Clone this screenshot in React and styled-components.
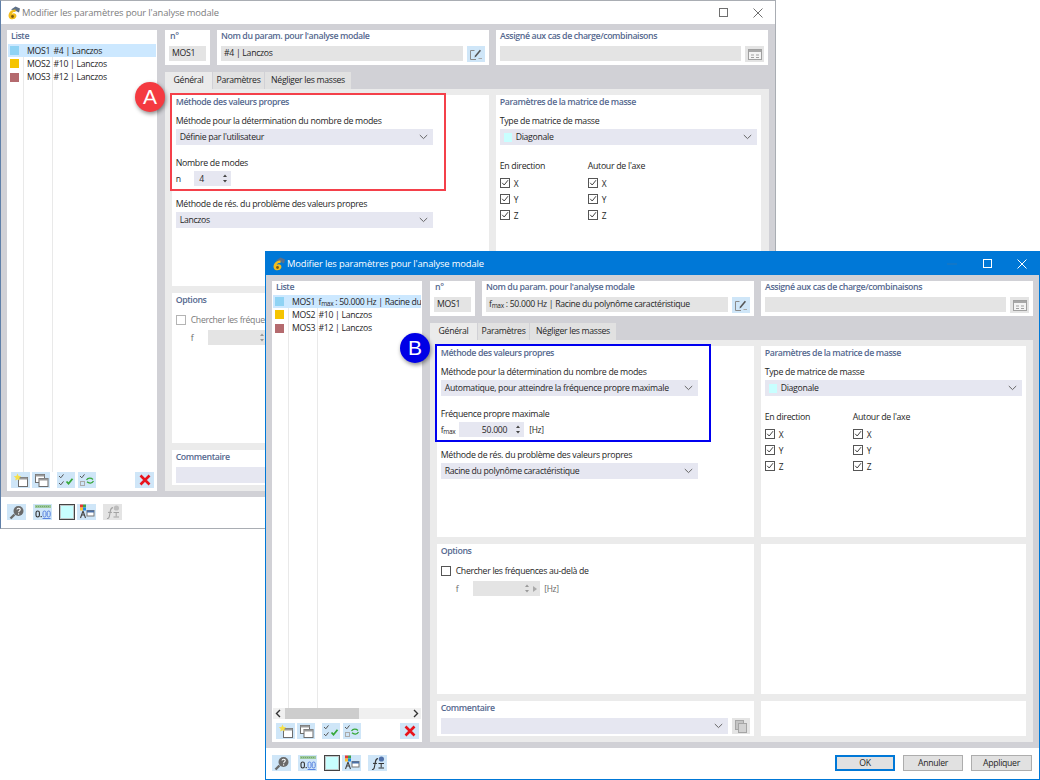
import React from "react";
import styled, { createGlobalStyle } from "styled-components";

const Global = createGlobalStyle`
  html, body { margin: 0; padding: 0; background: #fff; }
  body { font-family: "Open Sans", "Noto Sans", "Liberation Sans", sans-serif; font-size: 9px; color: #262626; letter-spacing: -0.3px; }
  * { box-sizing: border-box; }
  svg { flex-shrink: 0; }
`;

const Stage = styled.main`
  position: relative;
  width: 1040px;
  height: 780px;
  overflow: hidden;
  background: #fff;
`;

const Win = styled.section`
  position: absolute;
  left: ${(p) => p.$x}px;
  top: ${(p) => p.$y}px;
  width: ${(p) => p.$w}px;
  height: 529px;
  display: flex;
  flex-direction: column;
  background: #fff;
  border: 1px solid ${(p) => (p.$active ? "#0078d7" : "#a9adb3")};
  ${(p) => (p.$active ? "" : "border-left-color:#5f7fa8;")}
`;

const TitleBar = styled.header`
  height: 23px;
  flex: none;
  display: flex;
  align-items: center;
  padding-left: 4px;
  gap: 1px;
  background: ${(p) => (p.$active ? "#0078d7" : "#fff")};
  color: ${(p) => (p.$active ? "#fff" : "#7d7d7d")};
  font-size: 9.4px;
  letter-spacing: -0.14px;
`;

const TitleText = styled.span`
  flex: 1;
  white-space: nowrap;
`;

const WinCtl = styled.span`
  width: 34px;
  height: 22px;
  display: flex;
  align-items: center;
  justify-content: center;
  color: ${(p) => (p.$active ? "#fff" : "#6f6f6f")};
`;

const Body = styled.div`
  flex: none;
  height: 473px;
  display: flex;
  gap: 8px;
  padding: 6px;
  background: #d1d1d6;
`;

const ListPanel = styled.aside`
  width: 150px;
  flex: none;
  display: flex;
  flex-direction: column;
  background: #fff;
  padding: 0 1px 3px 1px;
`;

const PanelTitle = styled.div`
  height: 14px;
  line-height: 12px;
  padding-left: ${(p) => p.$pad ?? 0}px;
  color: #56698f;
  font-size: 8.8px;
  font-weight: 600;
  letter-spacing: -0.4px;
  white-space: nowrap;
`;

const ListBody = styled.div`
  flex: 1;
  min-height: 0;
  overflow: hidden;
  background-image: linear-gradient(#e9e9e9, #e9e9e9), linear-gradient(#e9e9e9, #e9e9e9);
  background-size: 1px 100%, 1px 100%;
  background-position: 15px 0, 44px 0;
  background-repeat: no-repeat;
`;

const ListRow = styled.div`
  height: 13.3px;
  display: flex;
  align-items: center;
  white-space: nowrap;
  overflow: hidden;
  background: ${(p) => (p.$selected ? "#cce8ff" : "transparent")};
`;

const Swatch = styled.span`
  width: 9px;
  height: 9px;
  margin: 0 8px 0 2px;
  flex: none;
  background: ${(p) => p.$c};
`;

const RowCode = styled.span`
  width: 26.5px;
  flex: none;
  font-size: 8.7px;
`;

const RowText = styled.span`
  font-size: 8.7px;
  sub { font-size: 6.5px; vertical-align: -1px; line-height: 0; }
`;

const ScrollBar = styled.div`
  height: 11px;
  margin: 0 0 4px 0;
  flex: none;
  display: flex;
  align-items: center;
  justify-content: space-between;
  background: #f0f0f0;
  color: #444;
`;

const ScrollThumb = styled.div`
  width: 74px;
  height: 11px;
  margin-left: 1px;
  margin-right: auto;
  background: #cdcdcd;
`;

const ToolRow = styled.div`
  flex: none;
  display: flex;
  align-items: center;
  height: 16px;
  padding-left: ${(p) => p.$pad ?? 0}px;
`;

const IconBtn = styled.span`
  width: ${(p) => p.$w ?? 18}px;
  height: 16px;
  flex: none;
  margin-left: ${(p) => p.$ml ?? 0}px;
  display: flex;
  align-items: center;
  justify-content: center;
  background: ${(p) => (p.$off ? "#e4e4e4" : "#cfe6f8")};
`;

const Main = styled.div`
  flex: 1;
  min-width: 0;
  display: flex;
  flex-direction: column;
`;

const HeadRow = styled.div`
  display: flex;
  gap: 7px;
  height: 35px;
  flex: none;
`;

const HeadPanel = styled.div`
  width: ${(p) => p.$w}px;
  flex: none;
  background: #fff;
  padding: 0 4px;
  display: flex;
  flex-direction: column;
`;

const HeadInputs = styled.div`
  display: flex;
  gap: 4px;
  margin-top: 2px;
`;

const TextField = styled.div`
  flex: 1;
  min-width: 0;
  height: 15px;
  line-height: 15px;
  padding-left: 3px;
  background: #e4e4e4;
  font-size: 8.7px;
  white-space: nowrap;
  overflow: hidden;
  sub { font-size: 6.5px; vertical-align: -1px; line-height: 0; }
`;

const Tabs = styled.nav`
  display: flex;
  gap: 1px;
  height: 17px;
  margin-top: 7px;
  flex: none;
`;

const Tab = styled.span`
  width: ${(p) => p.$w}px;
  text-align: center;
  line-height: 17px;
  font-size: 8.7px;
  white-space: nowrap;
  background: ${(p) => (p.$on ? "#ebebeb" : "#e1e1e1")};
`;

const TabPage = styled.div`
  flex: 1;
  min-height: 0;
  background: #ebebeb;
  padding: 6px 7px;
  display: grid;
  grid-template-columns: 317px 265px;
  grid-template-rows: 191px 150px 35px;
  gap: 7px;
`;

const Group = styled.div`
  background: #fff;
  padding: 1px 4px 1px 3.7px;
  min-width: 0;
`;

const Label = styled.div`
  height: 12px;
  line-height: 12px;
  margin-top: ${(p) => p.$mt ?? 5}px;
  margin-bottom: 2px;
  font-size: 8.8px;
  white-space: nowrap;
`;

const Select = styled.div`
  height: 16px;
  width: ${(p) => p.$w ?? 257}px;
  display: flex;
  align-items: center;
  padding: 0 5px 0 4px;
  gap: 4px;
  background: #e6e7f1;
  font-size: 8.7px;
  white-space: nowrap;
`;

const SelectText = styled.span`
  flex: 1;
  min-width: 0;
`;

const SelSwatch = styled.span`
  width: 8px;
  height: 9px;
  background: #c8ffff;
`;

const SpinRow = styled.div`
  display: flex;
  align-items: center;
  height: 15px;
  margin-top: ${(p) => p.$mt ?? 0}px;
  font-size: 8.7px;
  color: ${(p) => (p.$off ? "#666" : "inherit")};
  sub { font-size: 6.5px; vertical-align: -1px; line-height: 0; }
`;

const SpinName = styled.span`
  width: ${(p) => p.$w}px;
  padding-left: ${(p) => p.$pl ?? 0}px;
  flex: none;
`;

const Spin = styled.span`
  width: ${(p) => p.$w}px;
  height: 15px;
  flex: none;
  display: flex;
  align-items: center;
  gap: 3px;
  padding: 0 3px 0 5px;
  background: ${(p) => (p.$off ? "#e4e4e4" : "#e6e7f1")};
`;

const SpinValue = styled.span`
  flex: 1;
  text-align: ${(p) => (p.$right ? "right" : "left")};
  padding-right: ${(p) => (p.$right ? 5 : 0)}px;
`;

const Unit = styled.span`
  margin-left: ${(p) => p.$ml ?? 5}px;
  font-size: 8.4px;
`;

const Columns = styled.div`
  display: flex;
  margin-top: 15px;
`;

const Col = styled.div`
  width: 88px;
`;

const ColHead = styled.div`
  height: 12px;
  line-height: 12px;
  margin-bottom: 3px;
  font-size: 8.8px;
`;

const CheckRow = styled.div`
  height: 16px;
  display: flex;
  align-items: center;
  gap: ${(p) => p.$gap ?? 4}px;
  font-size: ${(p) => p.$fs ?? 8.4}px;
  color: ${(p) => (p.$off ? "#7a7a7a" : "inherit")};
  margin-top: ${(p) => p.$mt ?? 0}px;
`;

const Box = styled.span`
  width: 10px;
  height: 10px;
  flex: none;
  border: 1px solid ${(p) => (p.$off ? "#b4b4b4" : "#555")};
  background: #fff;
  display: flex;
`;

const Footer = styled.footer`
  flex: 1;
  min-height: 0;
  display: flex;
  align-items: flex-start;
  padding: 7px 6px 0 6px;
  background: #fff;
`;

const FootSwatch = styled.span`
  width: 16px;
  height: 16px;
  margin-left: 7px;
  flex: none;
  background: #c8ffff;
  border: 1px solid #444;
  box-shadow: inset 0 0 0 1px #bfc8c8;
`;

const FootButtons = styled.div`
  margin-left: auto;
  display: flex;
  gap: 8px;
  padding-right: 1px;
`;

const PushBtn = styled.span`
  width: ${(p) => p.$w}px;
  height: 16px;
  text-align: center;
  line-height: 14px;
  font-size: 8.7px;
  background: #e1e1e1;
  border: 1px solid ${(p) => (p.$def ? "#0078d7" : "#adadad")};
  ${(p) => (p.$def ? "box-shadow: inset 0 0 0 1px #0078d7;" : "")}
`;

const Callout = styled.div`
  position: absolute;
  left: ${(p) => p.$x}px;
  top: ${(p) => p.$y}px;
  width: ${(p) => p.$w}px;
  height: ${(p) => p.$h}px;
  border: 2px solid ${(p) => p.$c};
`;

const Badge = styled.div`
  position: absolute;
  left: ${(p) => p.$x}px;
  top: ${(p) => p.$y}px;
  width: 30px;
  height: 30px;
  border-radius: 50%;
  display: flex;
  align-items: center;
  justify-content: center;
  background: ${(p) => p.$c};
  color: #fff;
  font-family: "Liberation Sans", sans-serif;
  font-size: 21px;
  letter-spacing: 0;
  box-shadow: 1px 2px 4px rgba(0, 0, 0, 0.45);
`;

/* ---------- drawings ---------- */

const Logo = () => (
  <svg width="16" height="16" viewBox="0 0 16 16">
    <path d="M6 4.5 L10.5 1.5 L15 3.5 L14 7.5 L11 6 Z" fill="#5d7088" />
    <path d="M10.5 4.5 C6.5 4 3 8 3.6 11.4 C4.2 15 10 15.4 11.3 11.8 C12.2 8.8 9 7.4 6.8 8.8 C7.4 7.2 8.8 6.6 10.5 7 Z" fill="#f2bd1d" />
    <circle cx="7.5" cy="11.5" r="1.4" fill="#7a5a10" />
  </svg>
);

const Win2 = ({ x = 5, y = 5, w = 9, h = 8, c = "#6d6d6d" }) => (
  <g>
    <rect x={x + 0.5} y={y + 0.5} width={w} height={h} fill="#fff" stroke={c} />
    <rect x={x + 0.5} y={y + 0.5} width={w} height="2" fill="#9a9a9a" />
  </g>
);

const NewIc = () => (
  <svg width="16" height="15" viewBox="0 0 16 15">
    <Win2 x={5} y={4} w={9} h={9} />
    <path d="M4.5 .5 L5.6 3 L8.2 3.2 L6.2 5 L6.8 7.6 L4.5 6.2 L2.2 7.6 L2.8 5 L.8 3.2 L3.4 3 Z" fill="#f6e04a" />
  </svg>
);
const CopyIc = () => (
  <svg width="16" height="15" viewBox="0 0 16 15">
    <Win2 x={2} y={1} w={9} h={8} />
    <Win2 x={5.5} y={5} w={9} h={8} />
  </svg>
);
const Tick = ({ x, y, c = "#555", s = 1 }) => (
  <path d={`M${x} ${y + 1.5} l1.8 1.8 l2.7 -3.4`} fill="none" stroke={c} strokeWidth={s} />
);
const CheckIc = () => (
  <svg width="16" height="15" viewBox="0 0 16 15">
    <Tick x={1} y={1.5} />
    <Tick x={1} y={8.5} />
    <path d="M8.5 8.5 l2 2.2 l4 -5" fill="none" stroke="#37a83a" strokeWidth="1.8" />
  </svg>
);
const SwapIc = () => (
  <svg width="16" height="15" viewBox="0 0 16 15">
    <Tick x={1} y={1.5} />
    <rect x="1.5" y="8.5" width="4" height="4" fill="none" stroke="#aaa" />
    <path d="M7.5 7 C9 4.6 12 4.6 14 6.4 M14.5 8 C13 10.6 10 10.6 8 8.8" fill="none" stroke="#37a83a" strokeWidth="1.3" />
  </svg>
);
const CrossIc = () => (
  <svg width="12" height="12" viewBox="0 0 12 12">
    <path d="M1.5 1.5 L10.5 10.5 M10.5 1.5 L1.5 10.5" stroke="#e8141c" strokeWidth="2.6" />
  </svg>
);
const HelpIc = () => (
  <svg width="16" height="15" viewBox="0 0 16 15">
    <circle cx="9.5" cy="6" r="5" fill="#6a6a6a" />
    <path d="M5.5 9.5 L1.5 13.5" stroke="#6a6a6a" strokeWidth="2.4" />
    <path d="M8 4.5 c.3 -1.8 3.4 -1.6 3.2 .3 c-.1 1 -1.6 1.2 -1.6 2.4 M9.6 8.2 v1.2" fill="none" stroke="#fff" strokeWidth="1.1" />
  </svg>
);
const UnitsIc = () => (
  <svg width="18" height="16" viewBox="0 0 18 16">
    <rect x="1" y="1" width="16" height="3" fill="#9cc89c" />
    <path d="M2 2.5 h14" stroke="#6fa96f" strokeDasharray="1 1" />
    <rect x="2" y="7" width="3.4" height="6" rx="1.7" fill="none" stroke="#333" strokeWidth="1.1" />
    <rect x="6.6" y="12" width="1.2" height="1.2" fill="#333" />
    <rect x="9" y="7" width="3" height="6" rx="1.5" fill="none" stroke="#5a84e0" />
    <rect x="13.2" y="7" width="3" height="6" rx="1.5" fill="none" stroke="#5a84e0" />
    <path d="M8.6 14.5 h8" stroke="#5a84e0" />
  </svg>
);
const ModelIc = () => (
  <svg width="16" height="16" viewBox="0 0 16 16">
    <rect x="1" y="0.5" width="3" height="3" fill="#e53935" />
    <rect x="4" y="0.5" width="3" height="3" fill="#43a047" />
    <rect x="1" y="3.5" width="3" height="3" fill="#fbc02d" />
    <rect x="4" y="3.5" width="3" height="3" fill="#1e88e5" />
    <path d="M4 7 L1.5 14 M4 7 L6.5 14 M2.5 11 h3" stroke="#444" strokeWidth="1.1" fill="none" />
    <rect x="8" y="6.5" width="7" height="5.5" fill="#fff" stroke="#777" />
    <rect x="8" y="6.5" width="7" height="2" fill="#4a70a8" />
  </svg>
);
const FxIc = ({ off }) => {
  const c = off ? "#a3a3a3" : "#333";
  return (
    <svg width="16" height="16" viewBox="0 0 16 16">
      <path d="M2 14.5 C4.4 15 4.4 12 5 9 C5.5 5.5 5.8 3.5 8 3.6" fill="none" stroke={c} strokeWidth="1.1" />
      <path d="M3 8.4 h4" stroke={c} />
      <path d="M8.5 8.5 h5.5 M11.2 8.5 v4 M8.5 13 h5.5" fill="none" stroke={c} />
      <circle cx="11.4" cy="4" r="2.6" fill={off ? "#bdbdbd" : "#4f6fa8"} />
    </svg>
  );
};
const EditIc = () => (
  <svg width="14" height="13" viewBox="0 0 14 13">
    <path d="M5.5 2.5 H1.5 V11.5 H7" fill="none" stroke="#8a8a8a" />
    <path d="M5.5 9.5 L6 7.6 L10.8 1.8 L12 2.8 L7 8.8 Z" fill="#555" />
    <path d="M9.5 10.5 h3.5" stroke="#a8a8a8" />
  </svg>
);
const TableIc = () => (
  <svg width="14" height="11" viewBox="0 0 14 11">
    <rect x=".5" y=".5" width="13" height="10" fill="#f4f4f4" stroke="#a0a0a0" />
    <rect x="1" y="1" width="12" height="2" fill="#a8a8a8" />
    <path d="M3 6 h3 M8 6 h3 M3 8.5 h3 M8 8.5 h3" stroke="#a0a0a0" />
  </svg>
);
const DocIc = () => (
  <svg width="12" height="13" viewBox="0 0 12 13">
    <rect x=".5" y=".5" width="8" height="9" fill="#c4c4c4" stroke="#a5a5a5" />
    <rect x="3.5" y="3.5" width="8" height="9" fill="#d2d2d2" stroke="#a5a5a5" />
  </svg>
);
const Chevron = ({ c = "#666" }) => (
  <svg width="9" height="6" viewBox="0 0 9 6">
    <path d="M.8 1 L4.5 4.6 L8.2 1" fill="none" stroke={c} strokeWidth="1" />
  </svg>
);
const Arrows = ({ c = "#444" }) => (
  <svg width="6" height="11" viewBox="0 0 6 11">
    <path d="M3 1.5 L5 4 H1 Z M3 9.5 L5 7 H1 Z" fill={c} />
  </svg>
);
const TickBox = () => (
  <svg width="8" height="8" viewBox="0 0 8 8">
    <path d="M1.2 3.8 L3.2 6 L7 1.2" fill="none" stroke="#444" strokeWidth="1" />
  </svg>
);
const Nav = ({ d }) => (
  <svg width="11" height="11" viewBox="0 0 11 11">
    <path d={d} fill="none" stroke="#333" strokeWidth="1.4" />
  </svg>
);

/* ---------- dialog ---------- */

const rowColors = ["#8fd3f4", "#f5c400", "#b46a6e"];

const Check = ({ children, off, checked = true, mt, fs, gap }) => (
  <CheckRow $off={off} $mt={mt} $fs={fs} $gap={gap}>
    <Box $off={off}>{checked && <TickBox />}</Box>
    {children}
  </CheckRow>
);

const Dialog = ({ d }) => (
  <Win $x={d.x} $y={d.y} $w={d.w} $active={d.active}>
    <TitleBar $active={d.active}>
      <Logo />
      <TitleText>Modifier les paramètres pour l'analyse modale</TitleText>
      <WinCtl>
        <svg width="10" height="10" viewBox="0 0 10 10">
          <path d="M0 5 h10" stroke="currentColor" strokeOpacity={d.active ? 0.3 : 0} />
        </svg>
      </WinCtl>
      <WinCtl $active={d.active}>
        <svg width="10" height="10" viewBox="0 0 10 10">
          <rect x="1.5" y=".5" width="8" height="8" fill="none" stroke="currentColor" />
        </svg>
      </WinCtl>
      <WinCtl $active={d.active}>
        <svg width="10" height="10" viewBox="0 0 10 10">
          <path d="M.5 .5 L9.5 9.5 M9.5 .5 L.5 9.5" stroke="currentColor" />
        </svg>
      </WinCtl>
    </TitleBar>
    <Body>
      <ListPanel>
        <PanelTitle $pad={3}>Liste</PanelTitle>
        <ListBody>
          {d.rows.map((r, i) => (
            <ListRow key={r.code} $selected={i === 0}>
              <Swatch $c={rowColors[i]} />
              <RowCode>{r.code}</RowCode>
              <RowText>{r.text}</RowText>
            </ListRow>
          ))}
        </ListBody>
        {d.active && (
          <ScrollBar>
            <Nav d="M7 2 L3.5 5.5 L7 9" />
            <ScrollThumb />
            <Nav d="M4 2 L7.5 5.5 L4 9" />
          </ScrollBar>
        )}
        <ToolRow $pad={3}>
          <IconBtn $w={19}><NewIc /></IconBtn>
          <IconBtn $ml={2}><CopyIc /></IconBtn>
          <IconBtn $ml={7}><CheckIc /></IconBtn>
          <IconBtn $ml={3}><SwapIc /></IconBtn>
          <IconBtn $w={19} $ml={39}><CrossIc /></IconBtn>
        </ToolRow>
      </ListPanel>
      <Main>
        <HeadRow>
          <HeadPanel $w={45}>
            <PanelTitle $pad={1}>n°</PanelTitle>
            <HeadInputs><TextField>MOS1</TextField></HeadInputs>
          </HeadPanel>
          <HeadPanel $w={272}>
            <PanelTitle>Nom du param. pour l'analyse modale</PanelTitle>
            <HeadInputs>
              <TextField>{d.name}</TextField>
              <IconBtn $w={18}><EditIc /></IconBtn>
            </HeadInputs>
          </HeadPanel>
          <HeadPanel $w={272}>
            <PanelTitle>Assigné aux cas de charge/combinaisons</PanelTitle>
            <HeadInputs>
              <TextField />
              <IconBtn $w={19} $off><TableIc /></IconBtn>
            </HeadInputs>
          </HeadPanel>
        </HeadRow>
        <Tabs>
          <Tab $w={47} $on>Général</Tab>
          <Tab $w={51}>Paramètres</Tab>
          <Tab $w={86}>Négliger les masses</Tab>
        </Tabs>
        <TabPage>
          <Group>
            <PanelTitle>Méthode des valeurs propres</PanelTitle>
            <Label>Méthode pour la détermination du nombre de modes</Label>
            <Select><SelectText>{d.method}</SelectText><Chevron /></Select>
            <Label $mt={12}>{d.countLabel}</Label>
            {d.active ? (
              <SpinRow>
                <SpinName $w={18.5}>f<sub>max</sub></SpinName>
                <Spin $w={65}><SpinValue $right>50.000</SpinValue><Arrows /></Spin>
                <Unit>[Hz]</Unit>
              </SpinRow>
            ) : (
              <SpinRow>
                <SpinName $w={18.5}>n</SpinName>
                <Spin $w={37}><SpinValue>4</SpinValue><Arrows /></Spin>
              </SpinRow>
            )}
            <Label $mt={12}>Méthode de rés. du problème des valeurs propres</Label>
            <Select><SelectText>{d.solver}</SelectText><Chevron /></Select>
          </Group>
          <Group>
            <PanelTitle>Paramètres de la matrice de masse</PanelTitle>
            <Label>Type de matrice de masse</Label>
            <Select><SelSwatch /><SelectText>Diagonale</SelectText><Chevron /></Select>
            <Columns>
              {["En direction", "Autour de l'axe"].map((h) => (
                <Col key={h}>
                  <ColHead>{h}</ColHead>
                  {["X", "Y", "Z"].map((a) => <Check key={a}>{a}</Check>)}
                </Col>
              ))}
            </Columns>
          </Group>
          <Group>
            <PanelTitle>Options</PanelTitle>
            <Check off={!d.active} checked={false} mt={4} fs={8.7} gap={5}>Chercher les fréquences au-delà de</Check>
            <SpinRow $off $mt={2}>
              <SpinName $w={32.5} $pl={15}>f</SpinName>
              <Spin $w={67} $off><SpinValue /><Arrows c="#999" /><svg width="4" height="6" viewBox="0 0 4 6"><path d="M0 0 L4 3 L0 6 Z" fill="#aaa" /></svg></Spin>
              <Unit $ml={4}>[Hz]</Unit>
            </SpinRow>
          </Group>
          <Group />
          <Group>
            <PanelTitle>Commentaire</PanelTitle>
            <HeadInputs>
              <Select $w={288}><SelectText /><Chevron /></Select>
              <IconBtn $off><DocIc /></IconBtn>
            </HeadInputs>
          </Group>
          <Group />
        </TabPage>
      </Main>
    </Body>
    <Footer>
      <IconBtn $w={19}><HelpIc /></IconBtn>
      <IconBtn $w={19} $ml={7}><UnitsIc /></IconBtn>
      <FootSwatch />
      <IconBtn $w={19} $ml={2}><ModelIc /></IconBtn>
      <IconBtn $w={19} $ml={7} $off={!d.active}><FxIc off={!d.active} /></IconBtn>
      <FootButtons>
        <PushBtn $w={60} $def>OK</PushBtn>
        <PushBtn $w={60}>Annuler</PushBtn>
        <PushBtn $w={61}>Appliquer</PushBtn>
      </FootButtons>
    </Footer>
  </Win>
);

const lanczosRows = [
  { code: "MOS2", text: "#10 | Lanczos" },
  { code: "MOS3", text: "#12 | Lanczos" },
];

const dialogs = [
  {
    x: 0, y: 0, w: 776, active: false,
    rows: [{ code: "MOS1", text: "#4 | Lanczos" }, ...lanczosRows],
    name: "#4 | Lanczos",
    method: "Définie par l'utilisateur",
    countLabel: "Nombre de modes",
    solver: "Lanczos",
  },
  {
    x: 265, y: 251, w: 775, active: true,
    rows: [
      { code: "MOS1", text: <>f<sub>max</sub> : 50.000 Hz | Racine du polynôme caractéristique</> },
      ...lanczosRows,
    ],
    name: <>f<sub>max</sub> : 50.000 Hz | Racine du polynôme caractéristique</>,
    method: "Automatique, pour atteindre la fréquence propre maximale",
    countLabel: "Fréquence propre maximale",
    solver: "Racine du polynôme caractéristique",
  },
];

export default function App() {
  return (
    <Stage>
      <Global />
      {dialogs.map((d) => <Dialog key={d.x} d={d} />)}
      <Callout $x={170} $y={93} $w={276} $h={98} $c="#f4404a" />
      <Badge $x={135} $y={82} $c="#f43a40">A</Badge>
      <Callout $x={435} $y={344} $w={276} $h={98} $c="#0000f0" />
      <Badge $x={400} $y={333} $c="#0000e6">B</Badge>
    </Stage>
  );
}
